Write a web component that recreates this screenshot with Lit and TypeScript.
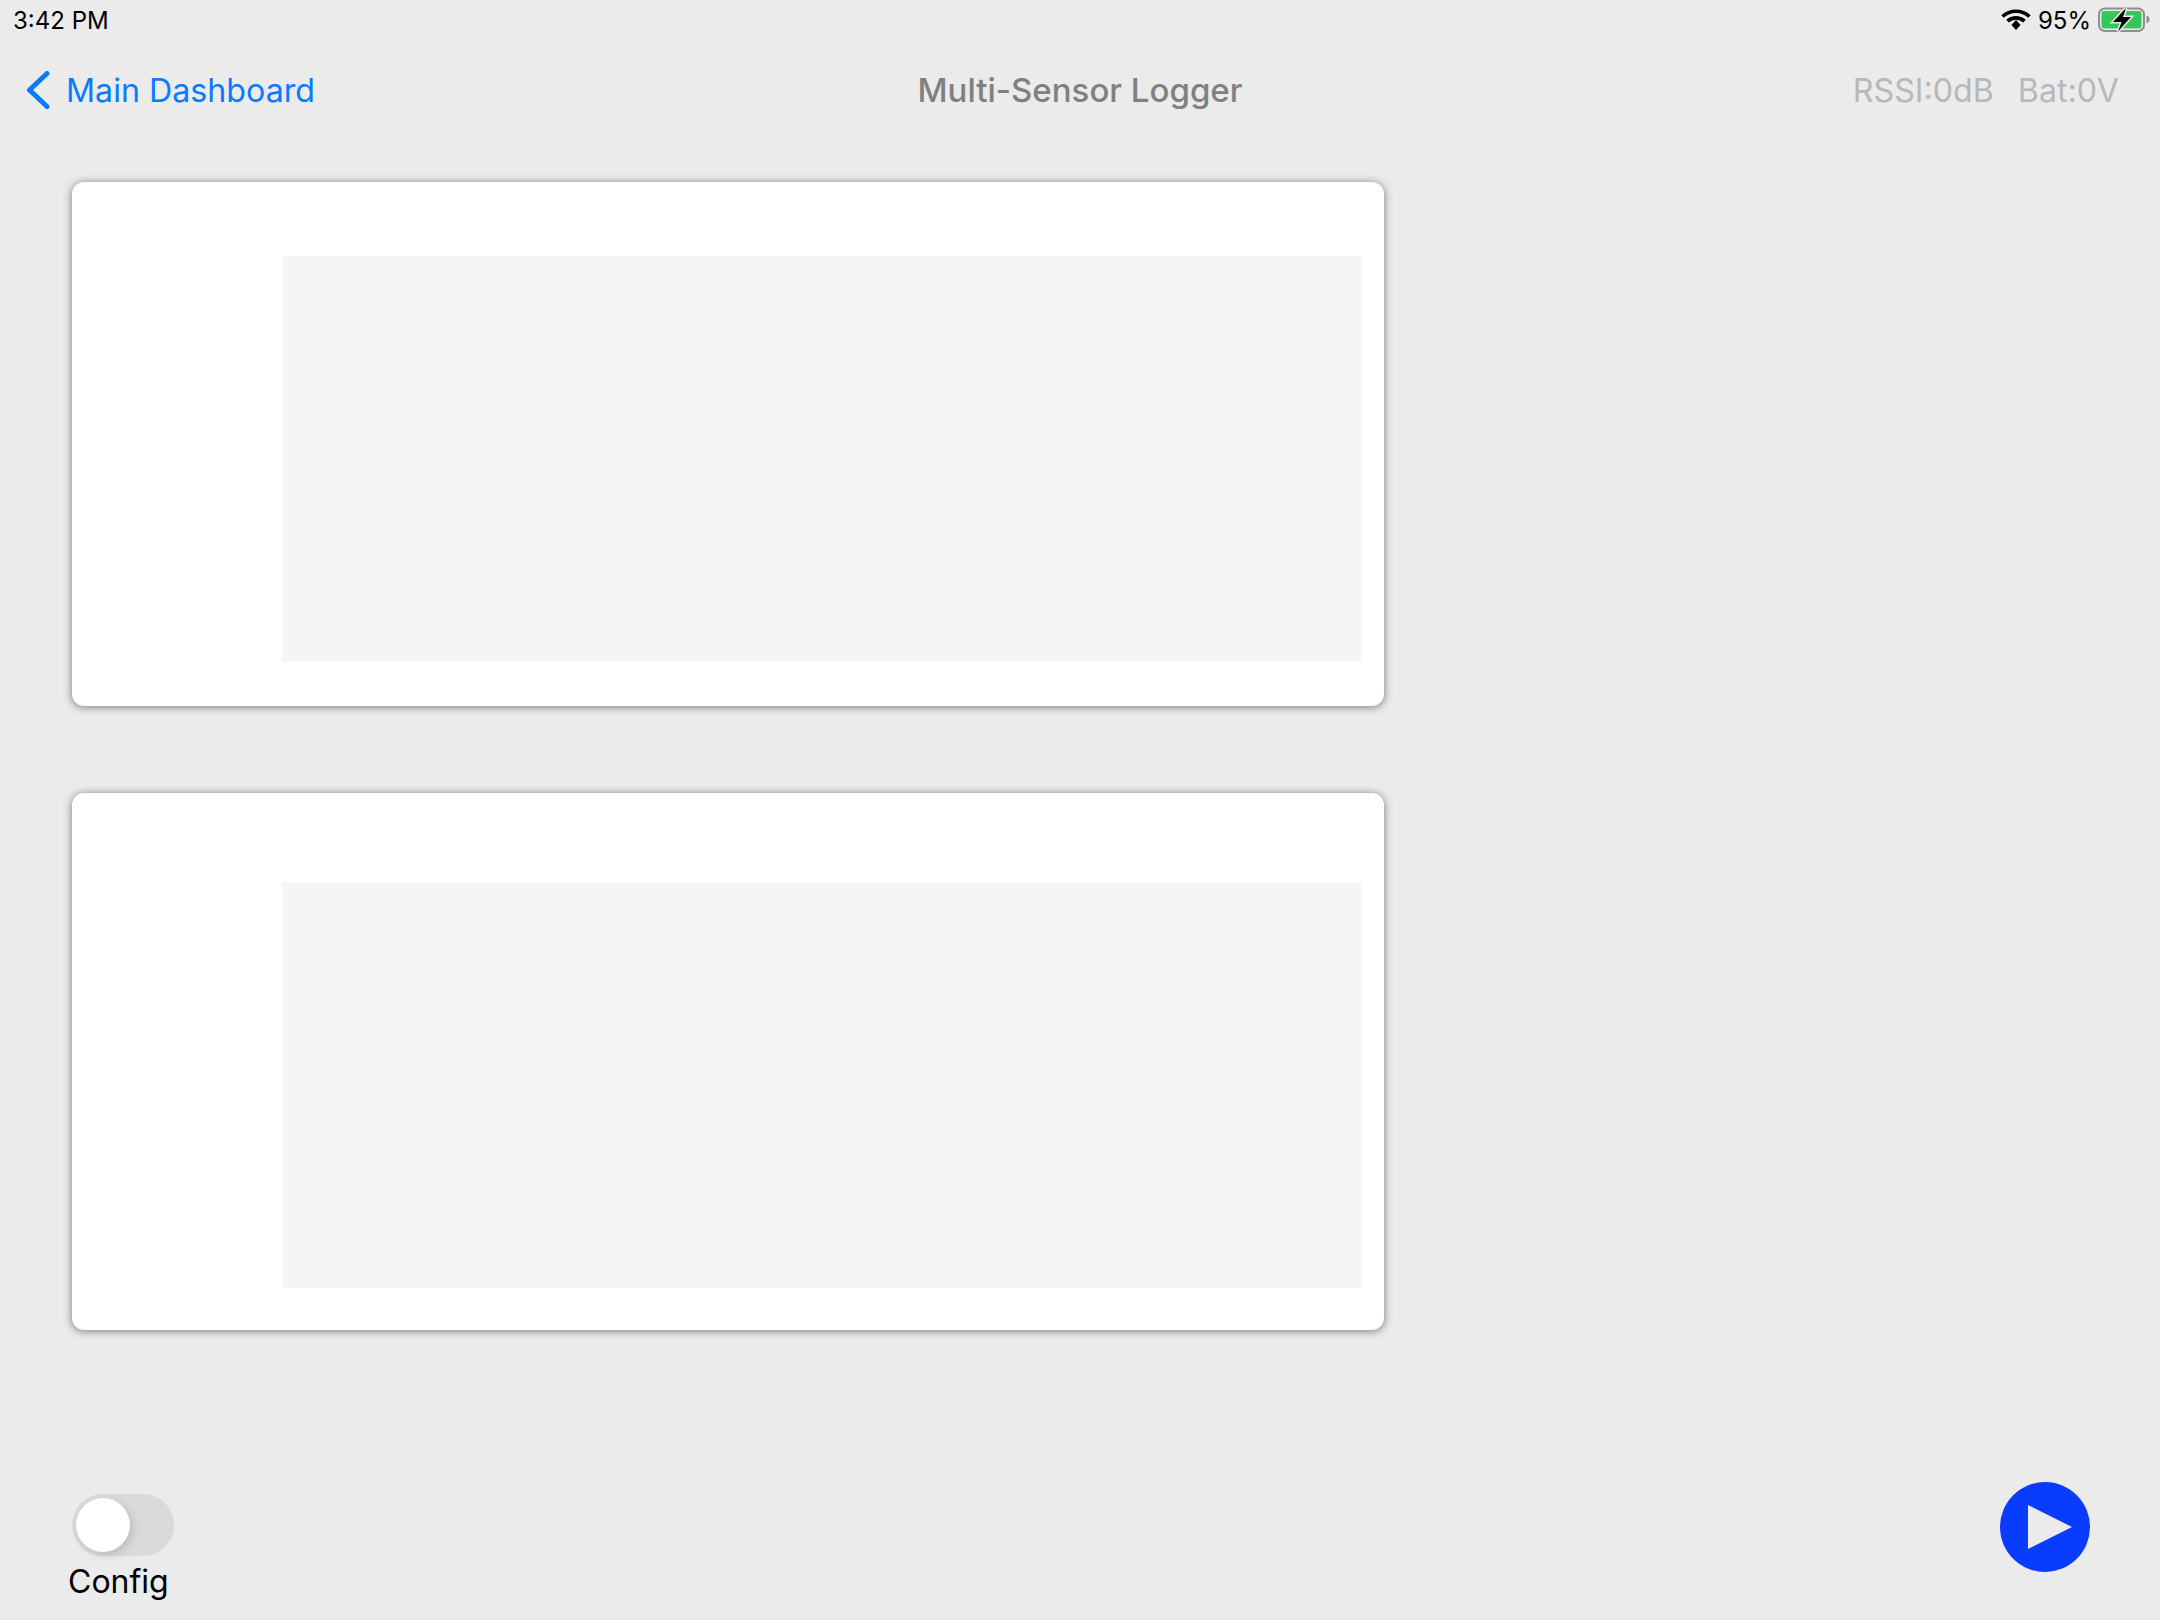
import { LitElement, html, css } from "lit";
import { customElement } from "lit/decorators.js";

@customElement("app-root")
export class AppRoot extends LitElement {
  static styles = css`
    :host {
      display: block;
      width: 2160px;
      height: 1620px;
      background: #ebebeb;
      font-family: Inter, "Liberation Sans", sans-serif;
      overflow: hidden;
    }
    .page { display: flex; flex-direction: column; height: 1620px; }
    .status {
      height: 40px;
      display: flex;
      align-items: center;
      justify-content: space-between;
      padding: 0 10px 0 13px;
      font-size: 24px;
      color: #000;
      flex: none;
    }
    .status-right { display: flex; align-items: center; gap: 7px; }
    .nav {
      height: 100px;
      display: grid;
      grid-template-columns: 1fr auto 1fr;
      align-items: center;
      padding: 0 26px;
      font-size: 32.2px;
      flex: none;
      box-sizing: border-box;
    }
    .back { display: flex; align-items: center; gap: 16px; color: #0a7aff; }
    .title { color: #808080; font-weight: 500; font-size: 33px; }
    .metrics { display: flex; justify-content: flex-end; gap: 24px; color: #b8b8b8; padding-right: 15px; }
    .cards { display: flex; flex-direction: column; gap: 87px; padding: 42px 0 0 72px; }
    .card {
      width: 1312px;
      height: 524px;
      background: #fff;
      border-radius: 12px;
      box-shadow: 0 1px 8px 0 rgba(0, 0, 0, 0.5);
      display: flex;
      flex-direction: column;
      align-items: flex-end;
      padding: 74px 22px 0 0;
      box-sizing: border-box;
    }
    .card + .card { height: 537px; padding-top: 89px; }
    .plot { width: 1080px; height: 406px; background: #f5f5f5; }
    .footer {
      margin-top: auto;
      display: flex;
      justify-content: space-between;
      padding: 0 70px 19px 68px;
      align-items: flex-start;
    }
    .config { display: flex; flex-direction: column; align-items: flex-start; gap: 6px; font-size: 32px; color: #000; }
    .switch {
      width: 102px;
      height: 62px;
      margin-left: 4px;
      border-radius: 31px;
      background: #dadada;
      display: flex;
      align-items: center;
      padding-left: 4px;
      box-sizing: border-box;
    }
    .thumb {
      width: 54px;
      height: 54px;
      border-radius: 50%;
      background: #fff;
      box-shadow: 3px 3px 10px rgba(0, 0, 0, 0.14);
    }
    .play { display: block; margin-top: -12px; }
    svg { display: block; }
  `;

  render() {
    return html`
      <div class="page">
        <div class="status">
          <span>3:42 PM</span>
          <div class="status-right">
            <svg width="30" height="22" viewBox="0 0 30 22">
              <path d="M1.5 7.5C9 .5 21 .5 28.5 7.5" fill="none" stroke="#000" stroke-width="3.6" />
              <path d="M6.5 12.2C11.5 7.8 18.5 7.8 23.5 12.2" fill="none" stroke="#000" stroke-width="3.6" />
              <path d="M10.5 16L15 10.9 19.5 16 15 21z" fill="#000" />
            </svg>
            <span>95%</span>
            <svg width="52" height="26" viewBox="0 0 52 26">
              <rect x="1" y="1.5" width="45" height="22.5" rx="6" fill="none" stroke="#8e8e8e" stroke-width="2" />
              <rect x="3.5" y="4" width="40" height="17.5" rx="3" fill="#34c759" />
              <path d="M48.5 8.5c2 .6 3 2.2 3 4s-1 3.4-3 4z" fill="#8e8e8e" />
              <path d="M28 1L15 15h8.6L20 24.6 33 10h-8z" fill="#000" stroke="#ebebeb" stroke-width="3" paint-order="stroke" />
            </svg>
          </div>
        </div>
        <div class="nav">
          <div class="back">
            <svg width="24" height="38" viewBox="0 0 24 38">
              <path d="M21 2.5L3.5 19 21 35.5" fill="none" stroke="#0a7aff" stroke-width="5" stroke-linecap="round" stroke-linejoin="round" />
            </svg>
            <span>Main Dashboard</span>
          </div>
          <div class="title">Multi-Sensor Logger</div>
          <div class="metrics"><span>RSSI:0dB</span><span>Bat:0V</span></div>
        </div>
        <div class="cards">
          <div class="card"><div class="plot"></div></div>
          <div class="card"><div class="plot"></div></div>
        </div>
        <div class="footer">
          <div class="config">
            <div class="switch"><div class="thumb"></div></div>
            <span>Config</span>
          </div>
          <svg class="play" width="90" height="90" viewBox="0 0 90 90">
            <circle cx="45" cy="45" r="45" fill="#0a3cff" />
            <path d="M28 23L72 45 28 67z" fill="#ebebeb" />
          </svg>
        </div>
      </div>
    `;
  }
}
